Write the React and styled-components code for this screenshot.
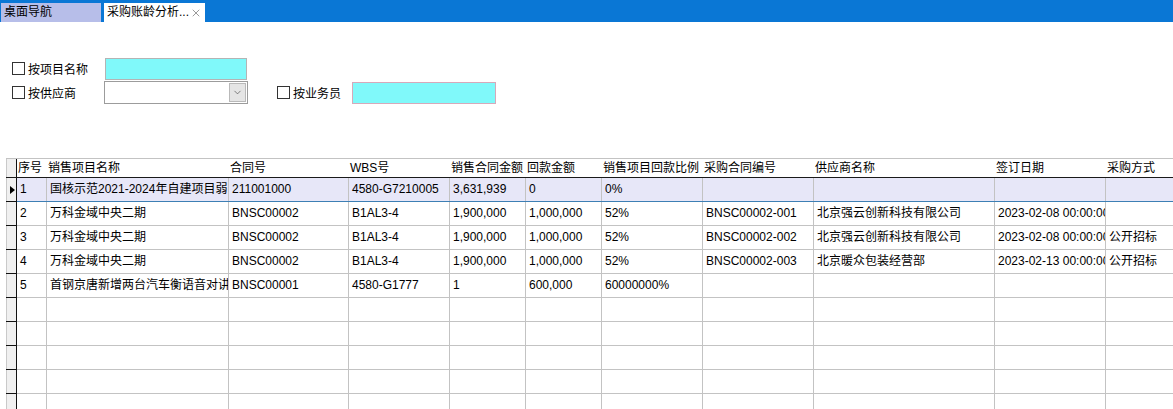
import React from "react";
import styled, { createGlobalStyle } from "styled-components";
import { X, ChevronDown } from "lucide-react";

const columns = [
  { key: "no", title: "序号", width: 30 },
  { key: "name", title: "销售项目名称", width: 182 },
  { key: "contract", title: "合同号", width: 120 },
  { key: "wbs", title: "WBS号", width: 101 },
  { key: "amount", title: "销售合同金额", width: 76 },
  { key: "paid", title: "回款金额", width: 76 },
  { key: "ratio", title: "销售项目回款比例", width: 101 },
  { key: "purchase", title: "采购合同编号", width: 111 },
  { key: "supplier", title: "供应商名称", width: 181 },
  { key: "date", title: "签订日期", width: 111 },
  { key: "method", title: "采购方式", width: 110 },
];

const rows = [
  {
    no: "1",
    name: "国核示范2021-2024年自建项目弱电工程",
    contract: "211001000",
    wbs: "4580-G7210005",
    amount: "3,631,939",
    paid: "0",
    ratio: "0%",
    purchase: "",
    supplier: "",
    date: "",
    method: "",
  },
  {
    no: "2",
    name: "万科金域中央二期",
    contract: "BNSC00002",
    wbs: "B1AL3-4",
    amount: "1,900,000",
    paid: "1,000,000",
    ratio: "52%",
    purchase: "BNSC00002-001",
    supplier: "北京强云创新科技有限公司",
    date: "2023-02-08 00:00:00",
    method: "",
  },
  {
    no: "3",
    name: "万科金域中央二期",
    contract: "BNSC00002",
    wbs: "B1AL3-4",
    amount: "1,900,000",
    paid: "1,000,000",
    ratio: "52%",
    purchase: "BNSC00002-002",
    supplier: "北京强云创新科技有限公司",
    date: "2023-02-08 00:00:00",
    method: "公开招标",
  },
  {
    no: "4",
    name: "万科金域中央二期",
    contract: "BNSC00002",
    wbs: "B1AL3-4",
    amount: "1,900,000",
    paid: "1,000,000",
    ratio: "52%",
    purchase: "BNSC00002-003",
    supplier: "北京暖众包装经营部",
    date: "2023-02-13 00:00:00",
    method: "公开招标",
  },
  {
    no: "5",
    name: "首钢京唐新增两台汽车衡语音对讲系统",
    contract: "BNSC00001",
    wbs: "4580-G1777",
    amount: "1",
    paid: "600,000",
    ratio: "60000000%",
    purchase: "",
    supplier: "",
    date: "",
    method: "",
  },
];

const template = `11px ${columns.map((c) => `${c.width}px`).join(" ")}`;

function Check({ label, width }) {
  return (
    <CheckLabel $width={width}>
      <Box />
      <span>{label}</span>
    </CheckLabel>
  );
}

export default function App() {
  const blanks = Array.from({ length: 6 });
  return (
    <Page>
      <GlobalStyle />
      <TabBar>
        <Tab>桌面导航</Tab>
        <Tab $active>
          <span>采购账龄分析...</span>
          <X size={12} strokeWidth={1.2} color="#555" />
        </Tab>
      </TabBar>

      <Filters>
        <FilterRow>
          <Check label="按项目名称" width={93} />
          <TextBox $width={142} />
        </FilterRow>
        <FilterRow>
          <Check label="按供应商" width={92} />
          <Select>
            <DropButton>
              <ChevronDown size={11} strokeWidth={1.4} color="#444" />
            </DropButton>
          </Select>
          <Spacer />
          <Check label="按业务员" width={75} />
          <TextBox $width={144} $pink />
        </FilterRow>
      </Filters>

      <Grid>
        <HeaderRow>
          <RowHead $header />
          {columns.map((c) => (
            <HeadCell key={c.key}>{c.title}</HeadCell>
          ))}
        </HeaderRow>
        {rows.map((r, i) => (
          <Row key={r.no} $selected={i === 0}>
            <RowHead>
              {i === 0 && (
                <svg width="5" height="8" viewBox="0 0 5 8">
                  <polygon points="0,0 5,4 0,8" fill="#000" />
                </svg>
              )}
            </RowHead>
            {columns.map((c) => (
              <Cell key={c.key}>{r[c.key]}</Cell>
            ))}
          </Row>
        ))}
        {blanks.map((_, i) => (
          <Row key={`b${i}`}>
            <RowHead />
            {columns.map((c) => (
              <Cell key={c.key} />
            ))}
          </Row>
        ))}
      </Grid>
    </Page>
  );
}

const GlobalStyle = createGlobalStyle`
  html, body {
    margin: 0;
    padding: 0;
    background: #fff;
    overflow: hidden;
  }
  body {
    font-family: "Liberation Sans", "Noto Sans CJK SC", sans-serif;
    font-size: 12px;
    color: #000;
  }
`;

const Page = styled.div`
  width: 1173px;
  height: 409px;
  overflow: hidden;
`;

const TabBar = styled.div`
  display: flex;
  align-items: flex-end;
  gap: 3px;
  height: 22px;
  padding-left: 1px;
  background: #0a77d5;
  box-sizing: border-box;
`;

const Tab = styled.div`
  display: flex;
  align-items: center;
  justify-content: space-between;
  box-sizing: border-box;
  width: ${(p) => (p.$active ? "101px" : "100px")};
  height: 19px;
  padding: 0 3px 0 3px;
  background: ${(p) => (p.$active ? "#ffffff" : "#b7bee9")};
  font-size: 12px;
  line-height: 19px;
  white-space: nowrap;
`;

const Filters = styled.div`
  display: flex;
  flex-direction: column;
  gap: 1px;
  padding: 35px 0 0 12px;
`;

const FilterRow = styled.div`
  display: flex;
  align-items: center;
  height: 23px;
`;

const CheckLabel = styled.label`
  display: flex;
  align-items: center;
  gap: 3px;
  width: ${(p) => p.$width}px;
  flex: none;
  font-size: 12px;
`;

const Box = styled.span`
  width: 13px;
  height: 13px;
  box-sizing: border-box;
  border: 1px solid #333;
  background: #fff;
`;

const TextBox = styled.div`
  width: ${(p) => p.$width}px;
  height: 22px;
  box-sizing: border-box;
  background: #80f9fa;
  border: 1px solid ${(p) => (p.$pink ? "#d6a9ba" : "#b4b4b4")};
`;

const Select = styled.div`
  display: flex;
  justify-content: flex-end;
  align-items: center;
  width: 144px;
  height: 23px;
  box-sizing: border-box;
  padding-right: 1px;
  background: #fff;
  border: 1px solid #9c9c9c;
`;

const DropButton = styled.div`
  display: flex;
  align-items: center;
  justify-content: center;
  width: 17px;
  height: 19px;
  box-sizing: border-box;
  background: #e5e5e5;
  border: 1px solid #b9b9b9;
`;

const Spacer = styled.div`
  width: 29px;
`;

const Grid = styled.div`
  margin: 54px 0 0 6px;
  width: 1300px;
`;

const HeaderRow = styled.div`
  display: grid;
  grid-template-columns: ${template};
  height: 20px;
  box-sizing: border-box;
  border-top: 1px solid #c3c3c3;
  border-bottom: 1px solid #1a1a1a;
`;

const HeadCell = styled.div`
  padding-left: 1px;
  line-height: 18px;
  white-space: nowrap;
  overflow: hidden;
`;

const Row = styled.div`
  display: grid;
  grid-template-columns: ${template};
  height: 24px;
  box-sizing: border-box;
  background: ${(p) => (p.$selected ? "#e7e7f8" : "#fff")};
  border-bottom: 1px solid ${(p) => (p.$selected ? "#3d7fb4" : "#c3c3c3")};
`;

const RowHead = styled.div`
  display: flex;
  align-items: center;
  justify-content: flex-end;
  padding-right: 1px;
  box-sizing: border-box;
  background: #f0f0f0;
  border-left: 1px solid #c9c9c9;
  border-right: 1px solid #111;
  box-shadow: ${(p) => (p.$header ? "none" : "0 1px 0 #111")};
  position: relative;
  z-index: 1;
`;

const Cell = styled.div`
  box-sizing: border-box;
  padding-left: 3px;
  border-right: 1px solid #c3c3c3;
  line-height: 23px;
  white-space: nowrap;
  overflow: hidden;
`;
